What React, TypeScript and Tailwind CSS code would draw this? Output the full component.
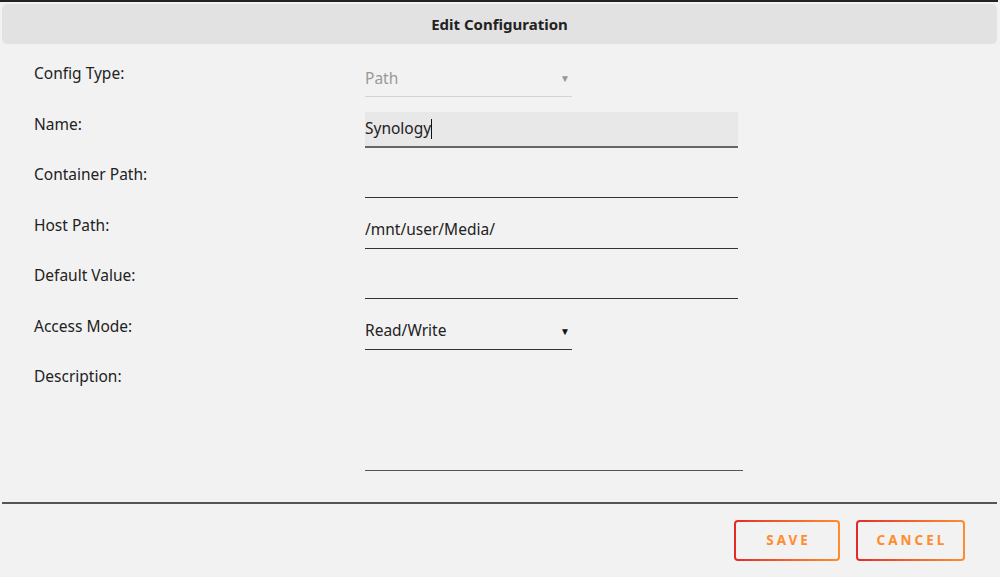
import React, { useState } from 'react';

const rows: { label: string; kind: 'select' | 'input' | 'textarea'; value?: string; muted?: boolean; active?: boolean }[] = [
  { label: 'Config Type:', kind: 'select', value: 'Path', muted: true },
  { label: 'Name:', kind: 'input', value: 'Synology', active: true },
  { label: 'Container Path:', kind: 'input', value: '' },
  { label: 'Host Path:', kind: 'input', value: '/mnt/user/Media/' },
  { label: 'Default Value:', kind: 'input', value: '' },
  { label: 'Access Mode:', kind: 'select', value: 'Read/Write' },
  { label: 'Description:', kind: 'textarea', value: '' },
];

const GradientButton = ({ text, width }: { text: string; width: string }) => (
  <button className={`h-[41px] rounded-[4px] p-[2px] bg-gradient-to-r from-[#e22828] to-[#ff8c2f] ${width}`}>
    <span className="flex h-full w-full items-center justify-center rounded-[2px] bg-[#f2f2f2] pl-[3px] text-[13.5px] font-bold tracking-[3px] text-[#ff8c2f]">
      {text}
    </span>
  </button>
);

const Field = ({ row }: { row: (typeof rows)[number] }) => {
  const [val, setVal] = useState(row.value || '');
  if (row.kind === 'select') {
    return (
      <div className={`flex h-[36px] w-[207px] items-center justify-between border-b pr-[2px] ${row.muted ? 'border-[#d4d4d4] text-[#999]' : 'border-[#333] text-[#222]'}`}>
        <span>{val}</span>
        <span className={`text-[10px] ${row.muted ? 'text-[#999]' : 'text-[#111]'}`}>▼</span>
      </div>
    );
  }
  if (row.kind === 'textarea') {
    return <div className="h-[107px] w-[378px] border-b border-[#555]" />;
  }
  if (row.active) {
    return (
      <div className="flex h-[36px] w-[373px] items-center border-b-2 border-[#666] bg-[#e8e8e8]">
        <span>{val}</span>
        <span className="h-[20px] w-px bg-[#111]" />
      </div>
    );
  }
  return (
    <div className="flex h-[36px] w-[373px] items-center border-b border-[#333]">
      <input
        value={val}
        onChange={(e) => setVal(e.target.value)}
        className="w-full bg-transparent text-[#222] outline-none"
      />
    </div>
  );
};

export default function App() {
  return (
    <div className="h-[577px] w-[1000px] overflow-hidden bg-[#f2f2f2] text-[15.5px] text-[#222]" style={{ fontFamily: '"Noto Sans", "Open Sans", sans-serif' }}>
      <div className="h-[2px] w-[998px] bg-[#222]" />
      <div className="mx-[2px] mt-[2px] flex h-[40px] w-[995px] items-center justify-center rounded-[5px] bg-[#e2e2e2] text-[15px] font-bold text-[#222]">
        Edit Configuration
      </div>
      <div className="flex flex-col pt-[12px]">
        {rows.map((r) => (
          <div key={r.label} className="flex">
            <div className="w-[365px] pl-[34px] pt-[6px] text-[15.5px]">{r.label}</div>
            <div className="pb-[9.5px] pt-[5px]">
              <Field row={r} />
            </div>
          </div>
        ))}
      </div>
      <div className="mx-[2px] mt-[21px] h-[2px] w-[995px] bg-[#555]" />
      <div className="flex justify-end gap-[16px] pr-[35px] pt-[16px]">
        <GradientButton text="SAVE" width="w-[106px]" />
        <GradientButton text="CANCEL" width="w-[109px]" />
      </div>
    </div>
  );
}
